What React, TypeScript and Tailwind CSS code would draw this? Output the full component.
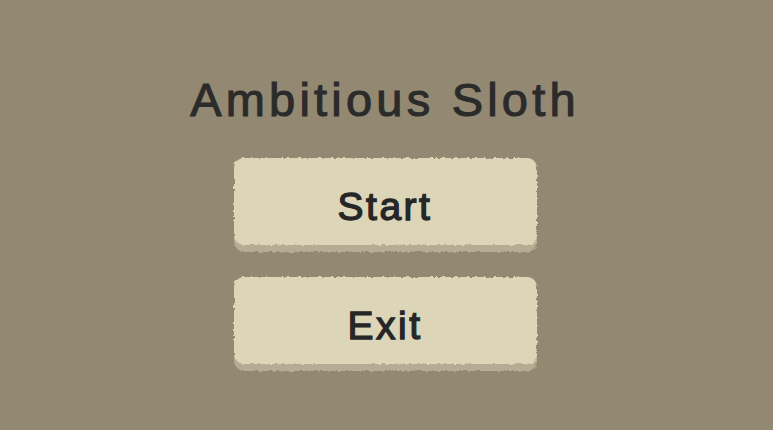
import React from "react";

function RoughButton({ label }: { label: string }) {
  return (
    <div className="relative w-[303px] h-[94px] flex items-center justify-center">
      <div className="absolute inset-0 rounded-[10px] bg-[#b5ac93] [filter:url(#rough)]" />
      <div className="absolute left-0 right-0 top-0 h-[87px] rounded-[10px] bg-[#dcd5b7] [filter:url(#rough)]" />
      <span className="relative pt-[2px] text-[39px] leading-none tracking-[2.5px] text-[#262626] [font-family:'Liberation_Sans',Arial,sans-serif] [-webkit-text-stroke:1.3px_#262626]">
        {label}
      </span>
    </div>
  );
}

export default function App() {
  return (
    <div className="w-[773px] h-[430px] bg-[#938871] flex flex-col items-center pt-[74px] overflow-hidden">
      <svg width="0" height="0" className="absolute">
        <defs>
          <filter id="rough" x="-5%" y="-10%" width="110%" height="120%">
            <feTurbulence type="fractalNoise" baseFrequency="0.25" numOctaves="2" seed="3" />
            <feDisplacementMap in="SourceGraphic" scale="4" />
          </filter>
        </defs>
      </svg>
      <h1 className="text-[47px] leading-[52px] tracking-[4.2px] text-[#2b2b2b] [font-family:'Liberation_Sans',Arial,sans-serif] [-webkit-text-stroke:1.1px_#2b2b2b] ml-[-3px]">
        Ambitious Sloth
      </h1>
      <div className="mt-[32px] flex flex-col gap-[25px] ml-[-3px]">
        <RoughButton label="Start" />
        <RoughButton label="Exit" />
      </div>
    </div>
  );
}
